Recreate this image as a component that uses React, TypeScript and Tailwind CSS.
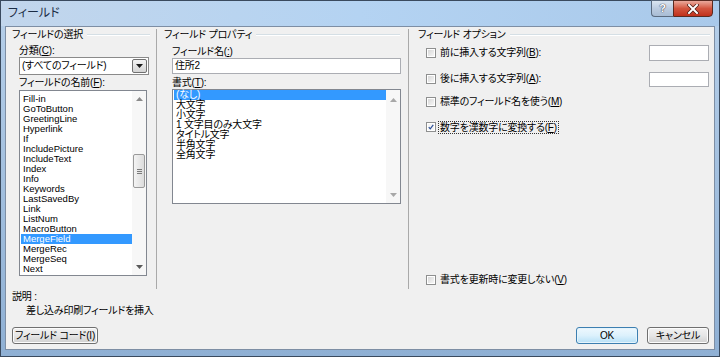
import React from "react";

const FONT = "font-['Liberation_Sans','Noto_Sans_CJK_JP',sans-serif] [font-feature-settings:'palt'] tracking-[-0.2px]";

function GroupHeader({ title, className = "" }: { title: string; className?: string }) {
  return (
    <div className={"flex items-center h-[12px] " + className}>
      <span className="text-[10px] leading-[12px] whitespace-nowrap text-black">{title}</span>
      <div className="flex-1 ml-[4px] flex flex-col">
        <div className="h-px bg-[#d5dfe5]" />
        <div className="h-px bg-white" />
      </div>
    </div>
  );
}

function Arrow({ dir, color = "#5a5a5a" }: { dir: "up" | "down"; color?: string }) {
  return (
    <svg width="7" height="4" viewBox="0 0 7 4">
      {dir === "up" ? (
        <path d="M0 4 L3.5 0 L7 4 Z" fill={color} />
      ) : (
        <path d="M0 0 L7 0 L3.5 4 Z" fill={color} />
      )}
    </svg>
  );
}

function Checkbox({ checked = false }: { checked?: boolean }) {
  return (
    <div className="w-[10px] h-[10px] border border-[#8e8f8f] bg-white p-px shrink-0">
      <div className={"w-full h-full flex items-center justify-center " + (checked ? "bg-[#f4f4f4]" : "bg-gradient-to-br from-[#d8d8d8] to-[#f6f6f6]")}>
        {checked && (
          <svg width="8" height="8" viewBox="0 0 8 8">
            <path d="M1 4.2 L3 6.4 L7 1.2" fill="none" stroke="#2a4e98" strokeWidth="1.6" />
          </svg>
        )}
      </div>
    </div>
  );
}

function Button({ label, primary = false, className = "" }: { label: string; primary?: boolean; className?: string }) {
  return (
    <div
      className={
        "h-[17px] rounded-[3px] border flex items-center justify-center text-[10px] leading-[12px] text-black " +
        (primary
          ? "border-[#3c7fb1] bg-gradient-to-b from-[#eef8fe] via-[#dcf1fc] to-[#b6e0f7] shadow-[inset_0_0_0_1px_#e5f4fc] "
          : "border-[#707070] bg-gradient-to-b from-[#f2f2f2] via-[#e6e6e6] to-[#d0d0d0] shadow-[inset_0_0_0_1px_#fcfcfc] ") +
        className
      }
    >
      {label}
    </div>
  );
}

const fieldNames = [
  "Fill-in",
  "GoToButton",
  "GreetingLine",
  "Hyperlink",
  "If",
  "IncludePicture",
  "IncludeText",
  "Index",
  "Info",
  "Keywords",
  "LastSavedBy",
  "Link",
  "ListNum",
  "MacroButton",
  "MergeField",
  "MergeRec",
  "MergeSeq",
  "Next",
];

const formats = ["(なし)", "大文字", "小文字", "1 文字目のみ大文字", "タイトル文字", "半角文字", "全角文字"];

export default function App() {
  return (
    <div className={"w-[720px] h-[357px] flex flex-col bg-gradient-to-b from-[#b7d0ea] to-[#8fb0d4] border border-[#3a4a5e] " + FONT}>
      {/* Title bar */}
      <div className="h-[25px] flex items-start shrink-0 bg-gradient-to-r from-[#c2d6ec] via-[#b4d3f2] to-[#a9c9ea]">
        <span className="ml-[7px] mt-[5px] text-[12px] leading-[15px] tracking-normal text-[#1a2c44]">フィールド</span>
        <div className="ml-auto mr-[6px] flex h-[17px] -mt-px">
          <div className="w-[22px] h-full rounded-bl-[4px] border border-[#5a6a7e] border-r-0 bg-gradient-to-b from-[#dbe6f1] via-[#bccce0] to-[#a8bcd4] flex items-center justify-center">
            <span className="text-[11px] leading-[11px] font-bold text-white [text-shadow:0_0_1px_#334,0_0_1px_#334]">?</span>
          </div>
          <div className="w-[40px] h-full rounded-br-[4px] border border-[#5a2a20] bg-gradient-to-b from-[#e9a99c] via-[#d2543e] to-[#c0301a] flex items-center justify-center">
            <svg width="12" height="10" viewBox="0 0 12 10">
              <path d="M2 1 L10 9 M10 1 L2 9" stroke="#4a1a12" strokeWidth="3.4" strokeLinecap="square" />
              <path d="M2 1 L10 9 M10 1 L2 9" stroke="#ffffff" strokeWidth="2" strokeLinecap="square" />
            </svg>
          </div>
        </div>
      </div>

      {/* Client */}
      <div className="flex-1 mx-[4px] mb-[6px] border border-[#7d8ea4] bg-[#f0f0f0] flex flex-col">
        <div className="h-[260px] mt-[2px] flex">
          {/* Column 1 */}
          <div className="w-[150px] pl-[6px] flex flex-col">
            <GroupHeader title="フィールドの選択" className="pr-[6px]" />
            <div className="mt-[4px] pl-[7px] text-[10px] leading-[12px]">分類(<span className="underline">C</span>):</div>
            <div className="ml-[7px] w-[130px] h-[18px] border border-[#8a8a8a] bg-white flex items-center">
              <span className="ml-[2px] text-[10px] leading-[12px]">(すべてのフィールド)</span>
              <div className="ml-auto mr-px w-[15px] h-[14px] border border-[#707070] rounded-[2px] bg-gradient-to-b from-[#f4f4f4] to-[#d4d4d4] flex items-center justify-center">
                <Arrow dir="down" color="#1a1a1a" />
              </div>
            </div>
            <div className="mt-[2px] pl-[7px] text-[10px] leading-[12px]">フィールドの名前(<span className="underline">F</span>):</div>
            <div className="mt-[1px] ml-[7px] w-[128px] h-[186px] border border-[#828790] bg-white flex">
              <div className="flex-1 pt-[3px] pl-px">
                {fieldNames.map((n) => (
                  <div
                    key={n}
                    className={
                      "h-[10px] leading-[10px] text-[9.5px] tracking-normal pl-[2px] whitespace-nowrap " +
                      (n === "MergeField" ? "bg-[#3399ff] text-white" : "text-black")
                    }
                  >
                    {n}
                  </div>
                ))}
              </div>
              <div className="w-[14px] bg-[#f7f7f7] flex flex-col items-center">
                <div className="mt-[6px]"><Arrow dir="up" color="#8a8a8a" /></div>
                <div className="mt-[53px] w-[12px] h-[34px] rounded-[2px] border border-[#9a9a9a] bg-gradient-to-r from-[#f4f4f4] to-[#dcdcdc] flex flex-col items-center justify-center gap-px">
                  <div className="w-[5px] h-px bg-[#7a7a7a]" />
                  <div className="w-[5px] h-px bg-[#7a7a7a]" />
                  <div className="w-[5px] h-px bg-[#7a7a7a]" />
                </div>
                <div className="mt-auto mb-[6px]"><Arrow dir="down" color="#5a5a5a" /></div>
              </div>
            </div>
          </div>

          {/* Column 2 */}
          <div className="w-[252px] border-l border-[#a9a9a9] pl-[7px] pr-[8px] flex flex-col">
            <GroupHeader title="フィールド プロパティ" />
            <div className="mt-[5px] pl-[8px] text-[10px] leading-[12px]">フィールド名(<span className="underline">:</span>)</div>
            <div className="ml-[8px] w-[229px] h-[16px] border border-[#abadb3] bg-white flex items-center">
              <span className="ml-[2px] text-[10px] leading-[12px]">住所2</span>
            </div>
            <div className="mt-[3px] pl-[8px] text-[10px] leading-[12px]">書式(<span className="underline">T</span>):</div>
            <div className="ml-[8px] w-[229px] h-[115px] border border-[#828790] bg-white flex">
              <div className="flex-1 pl-px">
                {formats.map((n, i) => (
                  <div
                    key={n}
                    className={
                      "h-[10px] leading-[10px] text-[10px] pl-[2px] whitespace-nowrap " +
                      (i === 0 ? "bg-[#3399ff] text-white" : "text-black")
                    }
                  >
                    {n}
                  </div>
                ))}
              </div>
              <div className="w-[14px] bg-[#f7f7f7] flex flex-col items-center">
                <div className="mt-[8px]"><Arrow dir="up" color="#a8a8a8" /></div>
                <div className="mt-auto mb-[6px]"><Arrow dir="down" color="#a8a8a8" /></div>
              </div>
            </div>
          </div>

          {/* Column 3 */}
          <div className="flex-1 border-l border-[#a9a9a9] pl-[9px] pr-[4px] flex flex-col">
            <GroupHeader title="フィールド オプション" />
            <div className="mt-[4px] h-[16px] pl-[8px] pr-[1px] flex items-center">
              <Checkbox />
              <span className="ml-[4px] text-[10px] leading-[12px]">前に挿入する文字列(<span className="underline">B</span>):</span>
              <div className="ml-auto w-[60px] h-[16px] border border-[#abadb3] bg-white" />
            </div>
            <div className="mt-[10px] h-[16px] pl-[8px] pr-[1px] flex items-center">
              <Checkbox />
              <span className="ml-[4px] text-[10px] leading-[12px]">後に挿入する文字列(<span className="underline">A</span>):</span>
              <div className="ml-auto w-[60px] h-[15px] border border-[#abadb3] bg-white" />
            </div>
            <div className="mt-[7px] h-[16px] pl-[8px] flex items-center">
              <Checkbox />
              <span className="ml-[4px] text-[10px] leading-[12px]">標準のフィールド名を使う(<span className="underline">M</span>)</span>
            </div>
            <div className="mt-[9px] h-[16px] pl-[8px] flex items-center">
              <Checkbox checked />
              <span className="ml-[2px] px-px text-[10px] leading-[11px] border border-dotted border-[#333]">数字を漢数字に変換する(<span className="underline">F</span>)</span>
            </div>
            <div className="mt-auto mb-px h-[16px] pl-[8px] flex items-center">
              <Checkbox />
              <span className="ml-[4px] text-[10px] leading-[12px]">書式を更新時に変更しない(<span className="underline">V</span>)</span>
            </div>
          </div>
        </div>

        {/* Description */}
        <div className="mt-[2px] pl-[6px] text-[10px] leading-[12px]">説明 :</div>
        <div className="mt-[2px] pl-[20px] text-[10px] leading-[12px]">差し込み印刷フィールドを挿入</div>

        {/* Buttons */}
        <div className="mt-[10px] pl-[6px] pr-[5px] flex items-center">
          <Button label="フィールド コード(I)" className="w-[86px]" />
          <Button label="OK" primary className="ml-auto w-[62px]" />
          <Button label="キャンセル" className="ml-[9px] w-[62px]" />
        </div>
      </div>
    </div>
  );
}
